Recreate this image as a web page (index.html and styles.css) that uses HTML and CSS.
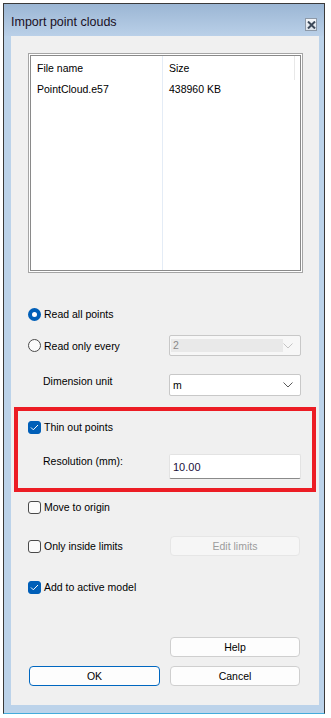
FILE: index.html
```html
<!DOCTYPE html>
<html lang="en">
<head>
    <meta charset="UTF-8">
    <meta name="viewport" content="width=device-width, initial-scale=1.0">
    <title>Import point clouds</title>
    <link rel="stylesheet" href="styles.css">
</head>
<body>
    <div class="window">
        <div class="titlebar">
            <span class="title">Import point clouds</span>
            <span class="close-btn">
                <svg width="9" height="8" viewBox="0 0 9 8"><path d="M1 0.5 L8 7.5 M8 0.5 L1 7.5" stroke="#3d4a5a" stroke-width="2"/></svg>
            </span>
        </div>

        <div class="client">
            <div class="file-list">
                <div class="list-inner">
                    <div class="list-col col-name">
                        <div class="list-head">File name</div>
                        <div class="list-cell">PointCloud.e57</div>
                    </div>
                    <div class="list-col col-size">
                        <div class="list-head">Size</div>
                        <div class="list-cell">438960 KB</div>
                    </div>
                </div>
            </div>

            <div class="row row-radio1">
                <label class="option"><span class="radio checked"></span>Read all points</label>
            </div>
            <div class="row row-radio2">
                <label class="option"><span class="radio"></span>Read only every</label>
                <div class="combo disabled">
                    <span class="combo-value">2</span>
                    <svg class="chevron" width="10" height="6" viewBox="0 0 10 6"><path d="M0.5 0.5 L5 5 L9.5 0.5" fill="none" stroke="#c4c4c4"/></svg>
                </div>
            </div>
            <div class="row row-dim">
                <span class="field-label">Dimension unit</span>
                <div class="combo">
                    <span class="combo-value">m</span>
                    <svg class="chevron" width="10" height="6" viewBox="0 0 10 6"><path d="M0.5 0.5 L5 5 L9.5 0.5" fill="none" stroke="#5a5a5a"/></svg>
                </div>
            </div>

            <div class="highlight-box">
                <div class="row row-thin">
                    <label class="option"><span class="checkbox checked"><svg width="9" height="7" viewBox="0 0 9 7"><path d="M1 3.5 L3.3 5.8 L8 1" fill="none" stroke="#fff" stroke-width="1"/></svg></span>Thin out points</label>
                </div>
                <div class="row row-resolution">
                    <span class="field-label">Resolution (mm):</span>
                    <div class="text-input">10.00</div>
                </div>
            </div>

            <div class="row row-move">
                <label class="option"><span class="checkbox"></span>Move to origin</label>
            </div>
            <div class="row row-limits">
                <label class="option"><span class="checkbox"></span>Only inside limits</label>
                <button type="button" class="btn disabled">Edit limits</button>
            </div>
            <div class="row row-add">
                <label class="option"><span class="checkbox checked"><svg width="9" height="7" viewBox="0 0 9 7"><path d="M1 3.5 L3.3 5.8 L8 1" fill="none" stroke="#fff" stroke-width="1"/></svg></span>Add to active model</label>
            </div>

            <div class="row row-help">
                <button type="button" class="btn">Help</button>
            </div>
            <div class="row row-actions">
                <button type="button" class="btn btn-ok">OK</button>
                <button type="button" class="btn">Cancel</button>
            </div>
        </div>
    </div>
</body>
</html>
```

FILE: styles.css
```css
body {
    margin: 0;
    background-color: #ffffff;
    font-family: "Liberation Sans", Arial, sans-serif;
    font-size: 10.5px;
    color: #000000;
}
.window {
    box-sizing: border-box;
    width: 322px;
    margin: 3px 0 0 3px;
    border: 1px solid #3a3a3a;
    border-bottom-color: #43acdc;
    background-color: #bcd3ea;
}
.titlebar {
    height: 32px;
    display: flex;
    align-items: center;
    justify-content: space-between;
    padding: 0 7px 0 7px;
    background: linear-gradient(to bottom, #9bb6d4, #bad0e8);
}
.title {
    font-size: 12.5px;
    color: #1a1024;
    padding-top: 4px;
}
.close-btn {
    box-sizing: border-box;
    width: 12px;
    height: 13px;
    margin-top: 9px;
    display: flex;
    align-items: center;
    justify-content: center;
    border: 1px solid #8d99a8;
    background: linear-gradient(to bottom, #f4f6f9, #dde4ec);
}
.client {
    box-sizing: border-box;
    height: 669px;
    margin: 0 5px 8px 7px;
    padding-top: 17px;
    background-color: #f0f0f0;
}

/* file list */
.file-list {
    box-sizing: border-box;
    width: 275px;
    height: 220px;
    margin-left: 17px;
    border: 1px solid #a5a5a5;
    padding: 1px;
    background-color: #ffffff;
}
.list-inner {
    box-sizing: border-box;
    height: 100%;
    border: 1px solid #8a8a8a;
    display: flex;
}
.list-col {
    box-sizing: border-box;
}
.col-name {
    width: 132px;
    border-right: 1px solid #e4ecf6;
}
.col-size {
    width: 132px;
}
.list-head {
    height: 24px;
    line-height: 24px;
    padding-left: 6px;
}
.col-size .list-head {
    border-right: 1px solid #e8e8e8;
}
.list-cell {
    height: 18px;
    line-height: 18px;
    padding-left: 6px;
}

/* option rows */
.row {
    display: flex;
    align-items: center;
}
.option {
    display: flex;
    align-items: center;
    gap: 3px;
    width: 141px;
    padding-left: 17px;
}
.radio, .checkbox {
    box-sizing: border-box;
    width: 13px;
    height: 13px;
    border: 1px solid #4a4a4a;
    background-color: #fbfbfb;
    display: flex;
    align-items: center;
    justify-content: center;
}
.radio {
    border-radius: 50%;
}
.radio.checked {
    border: 4px solid #005fb8;
    background-color: #ffffff;
}
.checkbox {
    border-radius: 3px;
}
.checkbox.checked {
    border-color: #005fb8;
    background-color: #005fb8;
}
.field-label {
    width: 126px;
    padding-left: 32px;
    line-height: 15px;
}
.row-radio1 {
    height: 20px;
    margin-top: 31px;
}
.row-radio2 {
    height: 21px;
    margin-top: 11px;
}
.row-dim {
    height: 22px;
    margin-top: 18px;
    align-items: flex-start;
}
.combo {
    box-sizing: border-box;
    width: 132px;
    height: 100%;
    display: flex;
    align-items: center;
    justify-content: space-between;
    padding: 0 7px 0 3px;
    border: 1px solid #c8c8c8;
    border-radius: 2px;
    background-color: #ffffff;
}
.combo.disabled {
    background-color: #f7f7f7;
    color: #8a8a8a;
    padding-left: 1px;
}
.combo.disabled .combo-value {
    width: 110px;
    height: 13px;
    line-height: 13px;
    padding-left: 2px;
    background-color: #e9e9e9;
}

/* red highlight */
.highlight-box {
    box-sizing: border-box;
    width: 302px;
    margin: 11px 0 0 3px;
    border: 4px solid #ec1c24;
    padding: 6px 0 9px 0;
}
.highlight-box .option {
    padding-left: 10px;
    width: 148px;
}
.highlight-box .field-label {
    padding-left: 25px;
}
.row-thin {
    height: 20px;
}
.row-resolution {
    height: 25px;
    margin-top: 17px;
    align-items: flex-start;
}
.text-input {
    box-sizing: border-box;
    width: 132px;
    height: 25px;
    margin-left: 0;
    padding-left: 3px;
    line-height: 24px;
    font-size: 11px;
    color: #1b0f3a;
    background-color: #ffffff;
    border: 1px solid #e3e3e3;
    border-bottom-color: #8a8a8a;
    border-radius: 2px;
}

.row-move {
    height: 20px;
    margin-top: 5px;
}
.row-limits {
    height: 20px;
    margin-top: 19px;
}
.row-add {
    height: 20px;
    margin-top: 21px;
}

/* buttons */
.btn {
    box-sizing: border-box;
    width: 130px;
    height: 20px;
    padding: 0;
    margin-left: 1px;
    font-family: "Liberation Sans", Arial, sans-serif;
    font-size: 10.5px;
    color: #000000;
    background-color: #fdfdfd;
    border: 1px solid #cfcfcf;
    border-radius: 4px;
}
.btn.disabled {
    color: #9c9c9c;
    background-color: #f6f6f6;
    border-color: #e6e6e6;
}
.row-help {
    height: 20px;
    margin-top: 40px;
    padding-left: 158px;
}
.row-actions {
    height: 20px;
    margin-top: 9px;
    padding-left: 18px;
    gap: 9px;
}
.btn-ok {
    width: 131px;
    margin-left: 0;
    border: 1px solid #0067c0;
}
```
